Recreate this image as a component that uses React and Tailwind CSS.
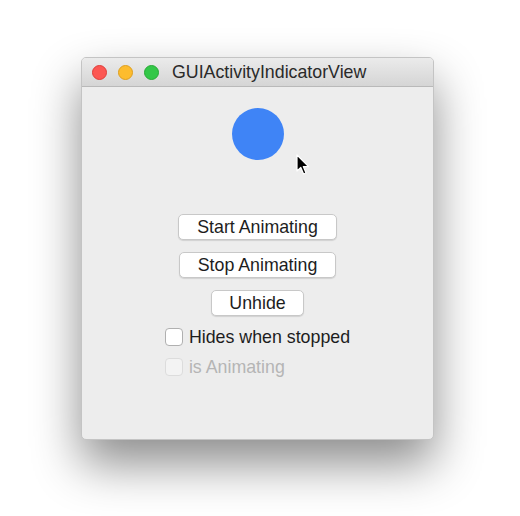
import React from 'react';

const font = { fontFamily: '"Liberation Sans", Arial, sans-serif' };

const MacButton = ({ children, className = '' }) => (
  <button
    className={`h-[26px] pt-[2px] rounded-[5px] bg-white border border-[#c8c8c8] shadow-[0_1px_1px_rgba(0,0,0,0.12)] text-[17.8px] text-[#1d1d1d] leading-none ${className}`}
  >
    {children}
  </button>
);

const Checkbox = ({ label, disabled }) => (
  <label
    className={`flex items-center gap-[6px] text-[17.8px] leading-[20px] ${
      disabled ? 'text-[#b5b5b5]' : 'text-[#1d1d1d]'
    }`}
  >
    <span
      className={`w-[18px] h-[18px] rounded-[4px] border ${
        disabled ? 'border-[#dcdcdc] bg-[#f3f3f3]' : 'border-[#b0b0b0] bg-white'
      }`}
    />
    {label}
  </label>
);

const Cursor = () => (
  <svg className="absolute left-[296px] top-[154px]" width="14" height="22" viewBox="0 0 14 22">
    <path
      d="M1 1 L1 17 L4.8 13.4 L7.6 20 L10 19 L7.3 12.6 L12.5 12.6 Z"
      fill="#000"
      stroke="#fff"
      strokeWidth="1.2"
      strokeLinejoin="round"
    />
  </svg>
);

export default function App() {
  return (
    <div className="relative w-[520px] h-[516px] bg-white overflow-hidden" style={font}>
      <div className="pt-[57px] pl-[81px]">
        <div className="w-[353px] h-[383px] rounded-[5px] bg-[#ededed] overflow-hidden border border-[#c4c4c4] shadow-[0_24px_48px_rgba(0,0,0,0.45)] flex flex-col">
          {/* Title bar */}
          <div className="h-[29px] shrink-0 flex items-center bg-gradient-to-b from-[#ebebeb] to-[#d5d5d5] border-b border-[#b9b9b9]">
            <div className="flex items-center gap-[11px] pl-[10px]">
              <span className="w-[15px] h-[15px] rounded-full bg-[#fc5753] border border-[#df3d39]" />
              <span className="w-[15px] h-[15px] rounded-full bg-[#fdbc2e] border border-[#de9f1f]" />
              <span className="w-[15px] h-[15px] rounded-full bg-[#33c748] border border-[#27aa35]" />
            </div>
            <span className="ml-[13px] text-[17.8px] text-[#2a2a2a]">GUIActivityIndicatorView</span>
          </div>

          {/* Content */}
          <div className="flex flex-col items-center">
            <div className="mt-[21px] w-[52px] h-[52px] rounded-full bg-[#3f84f6]" />

            <MacButton className="mt-[54px] w-[159px]">Start Animating</MacButton>
            <MacButton className="mt-[12px] w-[157px]">Stop Animating</MacButton>
            <MacButton className="mt-[12px] w-[93px]">Unhide</MacButton>

            <div className="mt-[11px] flex flex-col items-start gap-[10px]">
              <Checkbox label="Hides when stopped" />
              <Checkbox label="is Animating" disabled />
            </div>
          </div>
        </div>
      </div>
      <Cursor />
    </div>
  );
}
